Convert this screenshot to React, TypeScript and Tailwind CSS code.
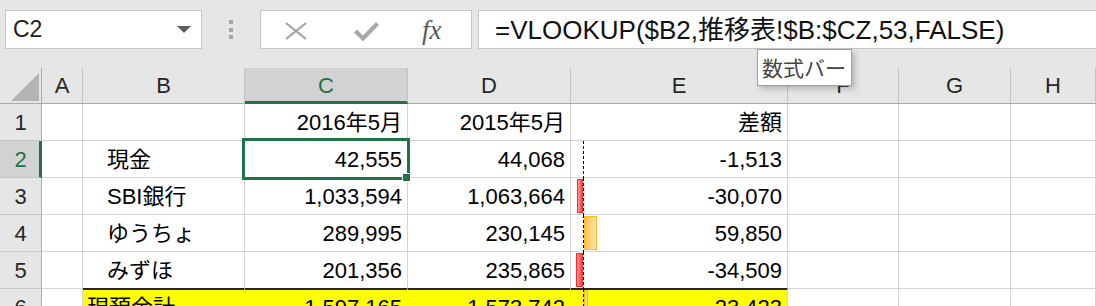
import React from "react";

type Row = {
  n: number;
  b: string;
  c: string;
  d: string;
  e: string;
  bar?: number;
  total?: boolean;
};

const rows: Row[] = [
  { n: 1, b: "", c: "2016年5月", d: "2015年5月", e: "差額" },
  { n: 2, b: "現金", c: "42,555", d: "44,068", e: "-1,513", bar: 0 },
  { n: 3, b: "SBI銀行", c: "1,033,594", d: "1,063,664", e: "-30,070", bar: -6 },
  { n: 4, b: "ゆうちょ", c: "289,995", d: "230,145", e: "59,850", bar: 13 },
  { n: 5, b: "みずほ", c: "201,356", d: "235,865", e: "-34,509", bar: -7 },
  { n: 6, b: "現預金計", c: "1,597,165", d: "1,573,742", e: "23,423", bar: 4, total: true },
];

const GRID =
  "grid grid-cols-[42px_41px_162px_163px_163px_217px_111px_112px_1fr]";

function Bar({ v }: { v: number }) {
  if (v === 0) return null;
  if (v < 0) {
    return (
      <div
        className="absolute top-[1px] bottom-[1px] border border-[#ff2a2a] bg-[linear-gradient(to_left,#ff3b3b,#ff9d9d)]"
        style={{ left: 12 + v, width: -v }}
      />
    );
  }
  return (
    <div
      className="absolute top-[1px] bottom-[1px] border border-[#ffb628] bg-[linear-gradient(to_right,#ffc44f,#ffe2a6)]"
      style={{ left: 13, width: v }}
    />
  );
}

function Axis() {
  return (
    <div className="absolute left-[12px] top-0 bottom-[-1px] w-px bg-[repeating-linear-gradient(to_bottom,#000_0px,#000_3px,transparent_3px,transparent_5px)]" />
  );
}

export default function App() {
  const headers = ["A", "B", "C", "D", "E", "F", "G", "H"];
  return (
    <div className="relative w-[1096px] h-[306px] overflow-hidden bg-white font-['Liberation_Sans','Noto_Sans_CJK_JP',sans-serif] text-black">
      {/* Formula bar area */}
      <div className="h-[68px] bg-[#e6e6e6] flex items-start pt-[10px] pl-[5px]">
        <div className="w-[197px] h-[39px] bg-white border border-[#c6c6c6] flex items-center justify-between pl-[7px] pr-[10px]">
          <span className="text-[23px] leading-none text-[#1e1e1e]">C2</span>
          <svg width="14" height="7" viewBox="0 0 14 7">
            <path d="M0 0H14L7 7Z" fill="#5f5f5f" />
          </svg>
        </div>
        <div className="w-[58px] h-[39px] flex flex-col items-center pt-[10px] gap-[3.5px]">
          <div className="w-[4px] h-[4px] bg-[#a3a3a3]" />
          <div className="w-[4px] h-[4px] bg-[#a3a3a3]" />
          <div className="w-[4px] h-[4px] bg-[#a3a3a3]" />
        </div>
        <div className="w-[212px] h-[39px] bg-white border border-[#c6c6c6] flex items-center">
          <svg className="ml-[24px] mt-[3px]" width="22" height="18" viewBox="0 0 22 18">
            <path d="M1 1L21 17M21 1L1 17" stroke="#a3a3a3" strokeWidth="2.2" fill="none" />
          </svg>
          <svg className="ml-[47px] mt-[2px]" width="25" height="20" viewBox="0 0 25 20">
            <path d="M1.5 10L9 17.5L23.5 2.5" stroke="#a8a8a8" strokeWidth="4.2" fill="none" />
          </svg>
          <span className="ml-[43px] mt-[2px] font-['Liberation_Serif',serif] italic text-[27px] leading-none text-[#595959]">
            fx
          </span>
        </div>
        <div className="ml-[6px] flex-1 h-[39px] bg-white border border-r-0 border-[#c6c6c6] flex items-center pl-[16px]">
          <span className="text-[26px] leading-none whitespace-nowrap text-[#111]">
            =VLOOKUP($B2,推移表!$B:$CZ,53,FALSE)
          </span>
        </div>
      </div>

      {/* Column header */}
      <div className={GRID}>
        <div className="h-[36px] bg-[#e6e6e6] border-r border-b border-[#ababab] flex items-end justify-end pr-[2px] pb-[2px]">
          <svg width="28" height="28" viewBox="0 0 28 28">
            <path d="M28 0V28H0Z" fill="#b4b4b4" />
          </svg>
        </div>
        {headers.map((h) => {
          const sel = h === "C";
          return (
            <div
              key={h}
              className={
                "h-[36px] flex items-center justify-center text-[22px] border-r border-r-[#c3c3c3] " +
                (sel
                  ? "bg-[#d2d2d2] text-[#217346] border-b-[3px] border-b-[#217346] pt-[2px]"
                  : "bg-[#e6e6e6] text-[#262626] border-b border-b-[#ababab]")
              }
            >
              {h}
            </div>
          );
        })}
      </div>

      {/* Rows */}
      {rows.map((r) => {
        const sel = r.n === 2;
        const total = !!r.total;
        const above = r.n === 5;
        const base = "h-[37px] border-b flex items-center text-[22px] whitespace-nowrap ";
        const grid = "border-r border-[#d4d4d4] bg-white ";
        const yellow = "bg-[#ffff00] shadow-[inset_0_1px_0_#262626] border-b-[#d4d4d4] ";
        const darkB = above ? "border-b-[#262626] " : "";
        return (
          <div key={r.n} className={GRID}>
            <div
              className={
                "h-[37px] flex items-center justify-center text-[22px] border-b border-b-[#c6c6c6] " +
                (sel
                  ? "bg-[#d2d2d2] text-[#217346] border-r-[3px] border-r-[#217346] pl-[2px]"
                  : "bg-[#e6e6e6] text-[#262626] border-r border-r-[#ababab]")
              }
            >
              {r.n}
            </div>
            <div className={base + grid} />
            <div
              className={
                base +
                (total
                  ? "border-r border-r-[#ffff00] pl-[4px] " + yellow
                  : grid + darkB + "pl-[24px]")
              }
            >
              {r.b}
            </div>
            <div
              className={
                base +
                "relative justify-end pr-[5px] " +
                (total ? "border-r border-r-[#ffff00] " + yellow : grid + darkB)
              }
            >
              {r.c}
              {sel && (
                <>
                  <div className="absolute left-[-3px] top-[-3px] right-[-3px] bottom-[-3px] border-[3px] border-[#217346] z-10 pointer-events-none" />
                  <div className="absolute left-[157px] top-[32px] w-[9px] h-[9px] bg-[#217346] border border-white z-20" />
                </>
              )}
            </div>
            <div
              className={
                base +
                "justify-end pr-[5px] " +
                (total ? "border-r border-r-[#ffff00] " + yellow : grid + darkB)
              }
            >
              {r.d}
            </div>
            <div
              className={
                base +
                "relative justify-end pr-[5px] " +
                (total ? "border-r border-r-[#d4d4d4] " + yellow : grid + darkB)
              }
            >
              {r.bar !== undefined && <Axis />}
              {r.bar !== undefined && <Bar v={r.bar} />}
              <span className="relative">{r.e}</span>
            </div>
            <div className={base + grid} />
            <div className={base + grid} />
            <div className={base + grid} />
          </div>
        );
      })}

      {/* Tooltip */}
      <div className="absolute left-[757px] top-[49px] w-[95px] h-[37px] bg-white border border-[#a0a0a0] shadow-[3px_3px_6px_rgba(0,0,0,0.22)] flex items-center pl-[4px] z-30">
        <span className="font-['Noto_Sans_CJK_JP',sans-serif] text-[21px] leading-none text-[#444] whitespace-nowrap">
          数式バー
        </span>
      </div>
    </div>
  );
}
